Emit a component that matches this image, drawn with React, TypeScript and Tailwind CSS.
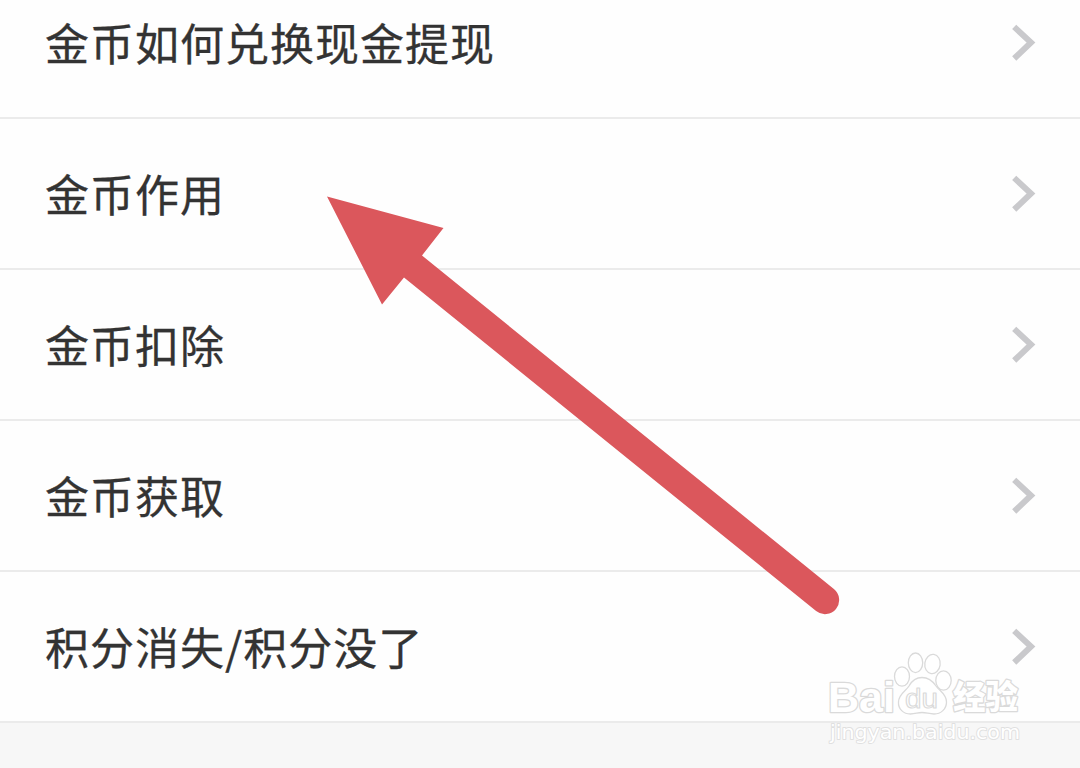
const items = [
  '金币如何兑换现金提现',
  '金币作用',
  '金币扣除',
  '金币获取',
  '积分消失/积分没了',
];

function Chevron() {
  return (
    <svg className="h-9 w-[25px] shrink-0 overflow-visible" viewBox="0 0 25 36" fill="none" aria-hidden="true">
      <path d="M2.2 1.9 19 17.5 2.2 33.5" stroke="#c9c9cc" strokeWidth="6" />
    </svg>
  );
}

function Row({ label }: { label: string }) {
  return (
    <li className="flex h-[151px] items-center justify-between border-b-2 border-[#ebebeb] pr-[43px] pl-[45px]">
      <span className="pb-0.5 text-[44px] leading-[60px] tracking-[1px] whitespace-nowrap text-[#333] [-webkit-text-stroke:0.3px_#333]">
        {label}
      </span>
      <Chevron />
    </li>
  );
}

function Arrow() {
  return (
    <svg
      className="pointer-events-none absolute top-[190px] left-[320px] h-[430px] w-[525px]"
      viewBox="320 190 525 430"
      fill="#db575c"
      aria-hidden="true"
    >
      <path d="M327 196.5 443.5 228 422 255.5 833.9 589A14.1 14.1 0 0 1 816.1 611L404 277.5 382 304.5Z" />
    </svg>
  );
}

function Watermark() {
  return (
    <svg
      className="pointer-events-none absolute top-[645px] left-[820px] h-[105px] w-[210px] font-['Liberation_Sans','Noto_Sans_CJK_SC',sans-serif]"
      viewBox="820 645 210 105"
      fill="#fff"
      stroke="#dadada"
      strokeLinejoin="round"
    >
      <g paintOrder="stroke" strokeWidth="2.6">
        <text x="828" y="712" fontSize="43" fontWeight="700" textLength="67" lengthAdjust="spacingAndGlyphs">Bai</text>
        <text x="953" y="709" fontSize="33" fontWeight="900" textLength="65" lengthAdjust="spacingAndGlyphs">经验</text>
      </g>
      <g strokeWidth="1.3">
        <ellipse cx="902" cy="676.5" rx="7.5" ry="9.7" />
        <ellipse cx="915.5" cy="662.8" rx="7.2" ry="9.8" />
        <ellipse cx="932.5" cy="664" rx="7.7" ry="9.7" transform="rotate(8 932.5 664)" />
        <ellipse cx="943.5" cy="680.5" rx="7.7" ry="9.7" />
        <path d="M922 677.5c-7 0-10.5 4-13 8.5-3 5-10.5 8-10.5 16-.5 7 5 12 12 12 5 0 7-1.5 11.500-1.500s7 1.500 12 1.500c7 0 12.500-5 12.500-12 0-8-7-11-10.500-16-3-4.500-7-8.500-14-8.500Z" />
      </g>
      <text x="905" y="708" fontSize="27" strokeWidth="1.1" textLength="33" lengthAdjust="spacingAndGlyphs">du</text>
      <text
        className="font-['DejaVu_Sans',sans-serif]"
        x="830"
        y="738.5"
        fontSize="20"
        strokeWidth="1.8"
        stroke="#e0e0e0"
        paintOrder="stroke"
        textLength="190"
        lengthAdjust="spacingAndGlyphs"
      >
        jingyan.baidu.com
      </text>
    </svg>
  );
}

export default function App() {
  return (
    <main className="relative h-[768px] w-[1080px] overflow-hidden bg-[#f7f7f7] font-['Noto_Sans_CJK_SC',sans-serif]">
      <ul className="-mt-8 bg-[#fefefe]">
        {items.map((label) => (
          <Row key={label} label={label} />
        ))}
      </ul>
      <Arrow />
      <Watermark />
    </main>
  );
}
